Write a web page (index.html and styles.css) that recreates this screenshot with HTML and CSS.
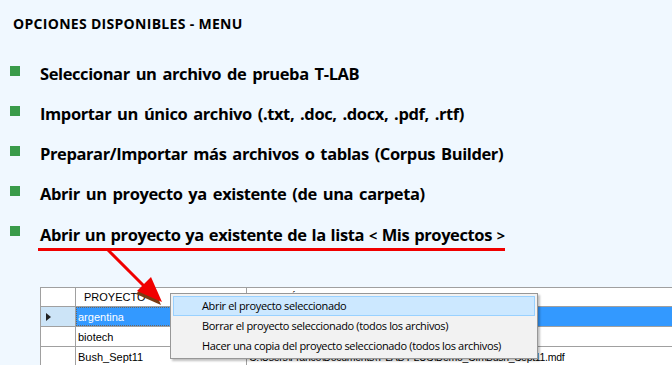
FILE: index.html
```html
<!DOCTYPE html>
<html lang="es">
<head>
<meta charset="utf-8">
<link rel="stylesheet" href="styles.css">
</head>
<body>
<div class="page">
  <h1 class="title">OPCIONES DISPONIBLES - MENU</h1>
  <ul class="menu-list">
    <li class="item"><span class="bullet"></span><span class="label">Seleccionar un archivo de prueba T-LAB</span></li>
    <li class="item"><span class="bullet"></span><span class="label">Importar un único archivo (.txt, .doc, .docx, .pdf, .rtf)</span></li>
    <li class="item"><span class="bullet"></span><span class="label">Preparar/Importar más archivos o tablas (Corpus Builder)</span></li>
    <li class="item"><span class="bullet"></span><span class="label">Abrir un proyecto ya existente (de una carpeta)</span></li>
    <li class="item"><span class="bullet"></span><span class="label underlined">Abrir un proyecto ya existente de la lista <span class="ang">&lt;</span> Mis proyectos <span class="ang">&gt;</span></span></li>
  </ul>
  <div class="grid-area">
    <div class="table">
      <div class="row head">
        <div class="c rh"></div>
        <div class="c c1">PROYECTO</div>
        <div class="c c2">UBICACIÓN</div>
      </div>
      <div class="row sel">
        <div class="c rh"><span class="tri"></span></div>
        <div class="c c1 selcell">argentina</div>
        <div class="c c2 selrow"></div>
      </div>
      <div class="row">
        <div class="c rh"></div>
        <div class="c c1">biotech</div>
        <div class="c c2">C:\Users\Franco\Documents\T-LAB PLUS\Demo\biotech.mdf</div>
      </div>
      <div class="row">
        <div class="c rh"></div>
        <div class="c c1">Bush_Sept11</div>
        <div class="c c2">C:\Users\Franco\Documents\T-LAB PLUS\Demo_CIn\Bush_Sept11.mdf</div>
      </div>
    </div>
    <div class="ctx">
      <div class="ctx-item hot">Abrir el proyecto seleccionado</div>
      <div class="ctx-item">Borrar el proyecto seleccionado (todos los archivos)</div>
      <div class="ctx-item">Hacer una copia del proyecto seleccionado (todos los archivos)</div>
    </div>
  </div>
  <svg class="arrow" width="672" height="365" viewBox="0 0 672 365">
    <line x1="108" y1="250" x2="147" y2="289" stroke="#f00000" stroke-width="3"/>
    <polygon points="161,305 136,294 150,279" fill="#7a3a10"/>
    <polygon points="162,302 137,291 151,277" fill="#f00000"/>
  </svg>
</div>
</body>
</html>
```
FILE: styles.css
```css
html, body {
  margin: 0;
  padding: 0;
}
body {
  background: #f0f8ff;
  width: 672px;
  height: 365px;
  overflow: hidden;
}
.page {
  position: relative;
  width: 672px;
  height: 365px;
  overflow: hidden;
  font-family: "Open Sans", "Noto Sans", sans-serif;
  color: #000;
}
.title {
  margin: 0;
  padding: 14px 0 0 13px;
  font-size: 14px;
  font-weight: 700;
  letter-spacing: 0.3px;
  line-height: 20px;
  height: 20px;
}
.menu-list {
  list-style: none;
  margin: 0;
  padding: 20px 0 0 10px;
}
.item {
  display: flex;
  align-items: center;
  height: 40px;
}
.bullet {
  width: 10px;
  height: 10px;
  background: #3a9b4a;
  margin-right: 20px;
  margin-top: -6px;
  flex: none;
}
.label {
  font-size: 16.5px;
  font-weight: 700;
  letter-spacing: -0.4px;
  word-spacing: 2px;
  line-height: 22px;
  white-space: nowrap;
}
.ang {
  font-size: 14.5px;
}
.underlined {
  border-bottom: 3px solid #f00000;
  padding-bottom: 1px;
  margin-top: 6px;
  margin-left: -2px;
  padding-left: 2px;
  word-spacing: 1px;
}
.grid-area {
  position: relative;
  margin-top: 33px;
  padding-left: 40px;
}
.table {
  width: 640px;
  background: #ffffff;
  border-top: 1px solid #a0a0a0;
  border-left: 1px solid #a0a0a0;
  font-family: "Liberation Sans", Arial, sans-serif;
  font-size: 11px;
}
.row {
  display: flex;
  height: 20px;
  border-bottom: 1px solid #a0a0a0;
  box-sizing: border-box;
}
.row.head {
  height: 19px;
}
.c {
  box-sizing: border-box;
  border-right: 1px solid #a0a0a0;
  display: flex;
  align-items: center;
  padding-left: 2px;
  white-space: nowrap;
  overflow: hidden;
}
.rh {
  width: 35px;
  flex: none;
}
.c1 {
  width: 171px;
  flex: none;
}
.c2 {
  flex: 1;
  border-right: none;
  font-size: 10.5px;
  letter-spacing: -0.3px;
}
.head .c1 {
  padding-left: 8px;
}
.sel .rh {
  background: #cce4f7;
  padding-left: 5px;
}
.tri {
  width: 0;
  height: 0;
  border-top: 4px solid transparent;
  border-bottom: 4px solid transparent;
  border-left: 5px solid #222;
}
.selcell {
  background: #3399ff;
  color: #ffffff;
  outline: 1px dotted #666;
  outline-offset: -1px;
}
.selrow {
  background: #3399ff;
}
.ctx {
  position: absolute;
  left: 170px;
  top: 6px;
  width: 368px;
  box-sizing: border-box;
  padding: 2px;
  background: #f2f2f2;
  border: 1px solid #979797;
  box-shadow: 2px 2px 2px rgba(0,0,0,0.25);
  font-family: "Open Sans", "Noto Sans", sans-serif;
  font-size: 11px;
  letter-spacing: -0.35px;
}
.ctx-item {
  height: 20px;
  line-height: 20px;
  padding-left: 29px;
  box-sizing: border-box;
  white-space: nowrap;
  color: #000;
}
.ctx-item.hot {
  background: #cce8ff;
  border: 1px solid #99d1ff;
  line-height: 18px;
  padding-left: 28px;
}
.arrow {
  position: absolute;
  left: 0;
  top: 0;
  pointer-events: none;
}
```
